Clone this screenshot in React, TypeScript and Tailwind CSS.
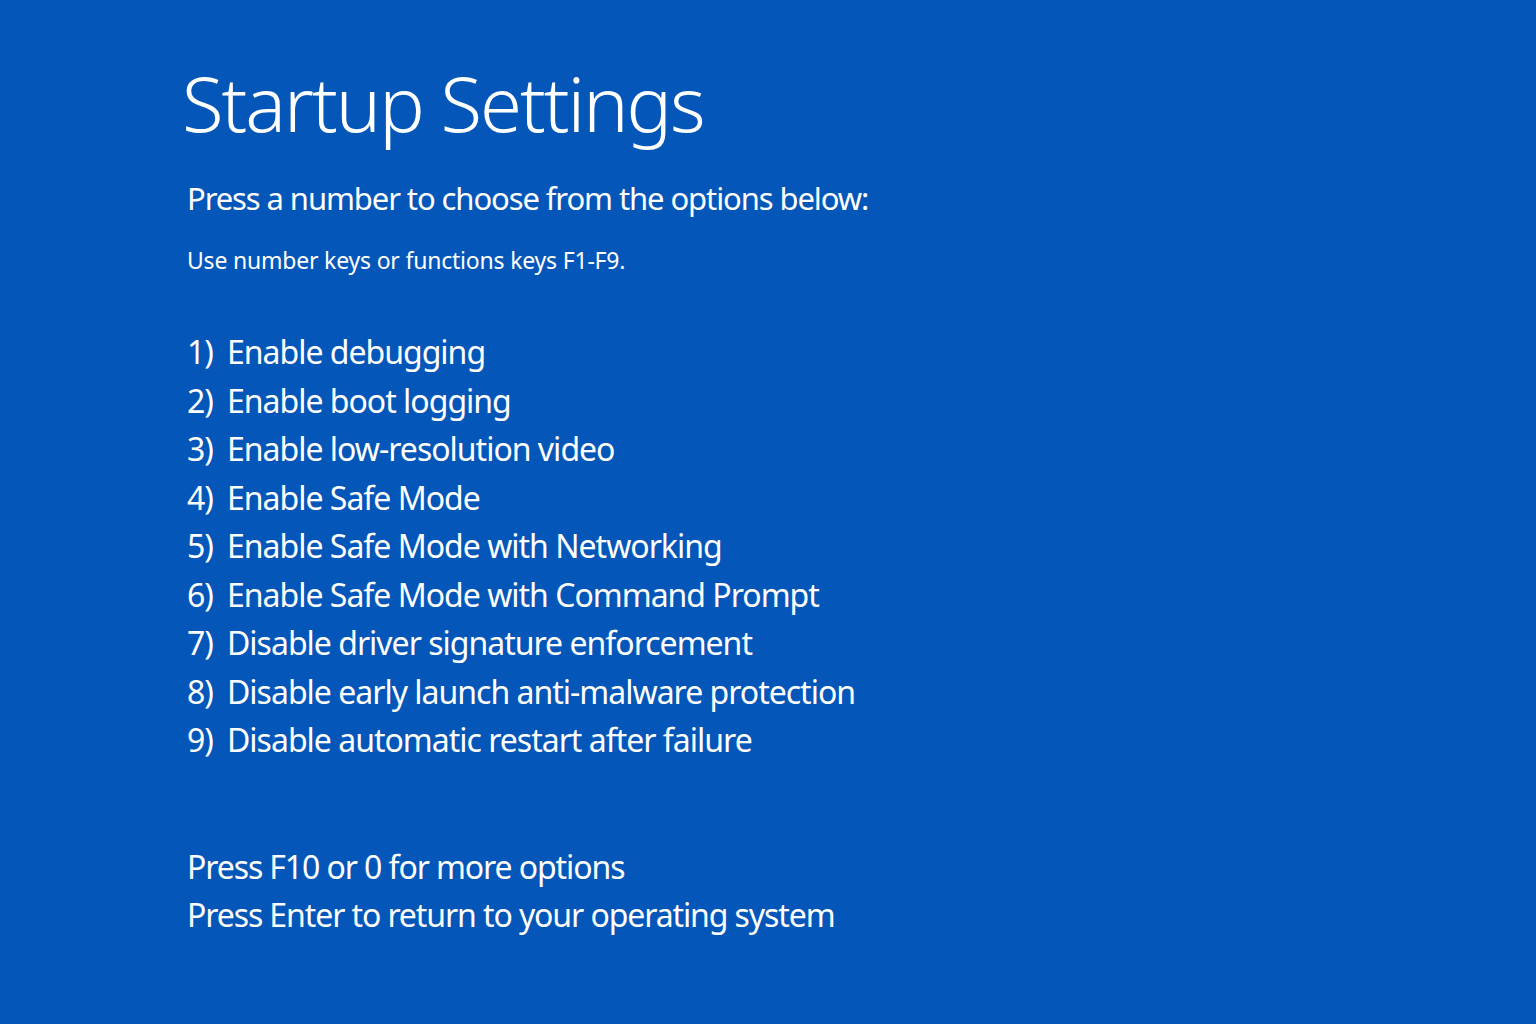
import React from 'react';

const options = [
  'Enable debugging',
  'Enable boot logging',
  'Enable low-resolution video',
  'Enable Safe Mode',
  'Enable Safe Mode with Networking',
  'Enable Safe Mode with Command Prompt',
  'Disable driver signature enforcement',
  'Disable early launch anti-malware protection',
  'Disable automatic restart after failure',
];

const App = () => {
  return (
    <div
      className="min-h-screen w-full bg-[#0457b8] text-white antialiased"
      style={{ fontFamily: '"Noto Sans", "Open Sans", sans-serif' }}
    >
      <div className="pl-[182px] pt-[56px]">
        <h1 className="text-[76px] leading-[94px] font-light tracking-[-2px]">Startup Settings</h1>

        <div className="pl-[5px]">
          <p className="mt-[26px] text-[31px] leading-[44px] tracking-[-1.1px]">
            Press a number to choose from the options below:
          </p>
          <p className="mt-[23px] text-[23px] leading-[34px] tracking-[-0.2px]">
            Use number keys or functions keys F1-F9.
          </p>

          <ol className="mt-[51px]">
            {options.map((label, i) => (
              <li key={label} className="flex text-[32px] leading-[48.5px] tracking-[-1px]">
                <span className="w-[40px] shrink-0">{i + 1})</span>
                <span>{label}</span>
              </li>
            ))}
          </ol>

          <div className="mt-[78px] text-[32px] leading-[48.5px] tracking-[-1.1px]">
            <p>Press F10 or 0 for more options</p>
            <p>Press Enter to return to your operating system</p>
          </div>
        </div>
      </div>
    </div>
  );
};

export default App;
